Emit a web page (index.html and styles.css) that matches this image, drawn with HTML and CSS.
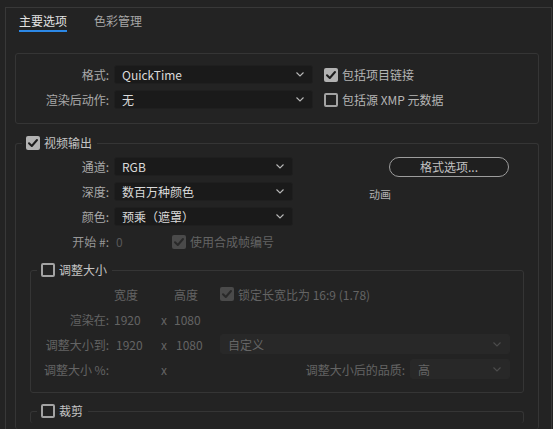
FILE: index.html
```html
<!DOCTYPE html>
<html lang="zh">
<head>
<meta charset="utf-8">
<link rel="stylesheet" href="styles.css">
</head>
<body>
<div class="window">
  <div class="panel">
    <div class="tabs">
      <div class="tab active">主要选项</div>
      <div class="tab">色彩管理</div>
    </div>

    <div class="group format-group">
      <div class="row">
        <div class="label">格式:</div>
        <div class="select w199"><span>QuickTime</span><svg class="chev" viewBox="0 0 8 5"><polyline points="0.5,0.5 4,4 7.5,0.5"/></svg></div>
        <div class="check checked"><svg viewBox="0 0 14 14"><polyline points="3,7.2 5.8,10 11,4"/></svg></div>
        <div class="check-text">包括项目链接</div>
      </div>
      <div class="row">
        <div class="label">渲染后动作:</div>
        <div class="select w199"><span>无</span><svg class="chev" viewBox="0 0 8 5"><polyline points="0.5,0.5 4,4 7.5,0.5"/></svg></div>
        <div class="check"></div>
        <div class="check-text">包括源 XMP 元数据</div>
      </div>
    </div>

    <fieldset class="fs video-fs">
      <legend><span class="check checked"><svg viewBox="0 0 14 14"><polyline points="3,7.2 5.8,10 11,4"/></svg></span><span class="legend-text">视频输出</span></legend>
      <div class="video-body">
        <div class="video-main">
          <div class="video-cols">
            <div class="video-left">
              <div class="row">
                <div class="label">通道:</div>
                <div class="select w179"><span>RGB</span><svg class="chev" viewBox="0 0 8 5"><polyline points="0.5,0.5 4,4 7.5,0.5"/></svg></div>
              </div>
              <div class="row">
                <div class="label">深度:</div>
                <div class="select w179"><span>数百万种颜色</span><svg class="chev" viewBox="0 0 8 5"><polyline points="0.5,0.5 4,4 7.5,0.5"/></svg></div>
              </div>
              <div class="row">
                <div class="label">颜色:</div>
                <div class="select w179"><span>预乘（遮罩）</span><svg class="chev" viewBox="0 0 8 5"><polyline points="0.5,0.5 4,4 7.5,0.5"/></svg></div>
              </div>
            </div>
            <div class="video-right">
              <div class="pill-btn">格式选项...</div>
              <div class="codec">动画</div>
            </div>
          </div>
          <div class="row start-row">
            <div class="label">开始 #:</div>
            <div class="start-val">0</div>
            <div class="check checked disabled"><svg viewBox="0 0 14 14"><polyline points="3,7.2 5.8,10 11,4"/></svg></div>
            <div class="check-text dim">使用合成帧编号</div>
          </div>
        </div>

        <fieldset class="fs resize-fs">
          <legend><span class="check"></span><span class="legend-text">调整大小</span></legend>
          <div class="resize-body">
            <div class="rrow">
              <div class="rlabel"></div>
              <div class="v1 dim">宽度</div>
              <div class="xcol"></div>
              <div class="v2 dim">高度</div>
              <div class="check checked disabled"><svg viewBox="0 0 14 14"><polyline points="3,7.2 5.8,10 11,4"/></svg></div>
              <div class="check-text dim">锁定长宽比为 16:9 (1.78)</div>
            </div>
            <div class="rrow">
              <div class="rlabel">渲染在:</div>
              <div class="v1 dim">1920</div>
              <div class="xcol dim">x</div>
              <div class="v2 dim">1080</div>
            </div>
            <div class="rrow">
              <div class="rlabel">调整大小到:</div>
              <div class="v1 dim inp">1920</div>
              <div class="xcol dim">x</div>
              <div class="v2 dim inp">1080</div>
              <div class="select disabled grow"><span>自定义</span><svg class="chev" viewBox="0 0 8 5"><polyline points="0.5,0.5 4,4 7.5,0.5"/></svg></div>
            </div>
            <div class="rrow">
              <div class="rlabel">调整大小 %:</div>
              <div class="v1"></div>
              <div class="xcol dim">x</div>
              <div class="v2"></div>
              <div class="qlabel">调整大小后的品质:</div>
              <div class="select disabled w100"><span>高</span><svg class="chev" viewBox="0 0 8 5"><polyline points="0.5,0.5 4,4 7.5,0.5"/></svg></div>
            </div>
          </div>
        </fieldset>

        <fieldset class="fs crop-fs">
          <legend><span class="check"></span><span class="legend-text">裁剪</span></legend>
          <div class="crop-body"></div>
        </fieldset>
      </div>
    </fieldset>
  </div>
</div>
</body>
</html>
```

FILE: styles.css
```css
* { box-sizing: border-box; }

html, body {
  margin: 0;
  padding: 0;
  background: #232323;
  overflow: hidden;
  height: 429px;
}

body {
  font-family: "Noto Sans CJK SC", "Noto Sans", sans-serif;
  font-size: 12px;
  color: #a9a9a9;
}

.window {
  padding: 7px 1px 0 5px;
  height: 429px;
}

.panel {
  border: 1px solid #383838;
  border-bottom: none;
  height: 422px;
  overflow: hidden;
}

/* tabs */
.tabs {
  display: flex;
  padding: 4px 0 0 13px;
}

.tab {
  font-size: 12px;
  line-height: 18px;
  height: 20px;
  color: #a6a6a6;
  border-bottom: 2px solid transparent;
}

.tab + .tab {
  margin-left: 27px;
}

.tab.active {
  color: #e2e2e2;
  border-bottom-color: #2c88e6;
}

/* groups */
.group {
  margin: 21px 12px 0 9px;
  border: 1px solid #353535;
  border-radius: 3px;
  padding: 11px 0 14px 0;
  display: flex;
  flex-direction: column;
  gap: 6px;
}

.row {
  display: flex;
  align-items: center;
  height: 19px;
}

.label {
  width: 93px;
  text-align: right;
  color: #a9a9a9;
  white-space: nowrap;
  flex: none;
}

.select {
  display: flex;
  align-items: center;
  justify-content: space-between;
  height: 19px;
  margin-left: 5px;
  padding: 0 8px 0 7px;
  background: #1a1a1a;
  border: 1px solid #1f1f1f;
  border-radius: 3px;
  color: #dadada;
  flex: none;
}

.select span {
  white-space: nowrap;
}

.w199 { width: 199px; }
.w179 { width: 179px; }
.w100 { width: 100px; }

.chev {
  width: 8px;
  height: 5px;
  fill: none;
  stroke: #b8b8b8;
  stroke-width: 1.1;
}

.check {
  width: 14px;
  height: 14px;
  border: 2px solid #a3a3a3;
  border-radius: 2px;
  flex: none;
  display: inline-flex;
  align-items: center;
  justify-content: center;
}

.row > .check {
  margin-left: 11px;
}

.check svg {
  width: 14px;
  height: 14px;
  fill: none;
  stroke: #1d1d1d;
  stroke-width: 2;
  stroke-linecap: round;
  stroke-linejoin: round;
}

.check.checked {
  background: #b2b2b2;
  border: none;
}

.check.checked.disabled {
  background: #4a4a4a;
}

.check.checked.disabled svg {
  stroke: #292929;
}

.check-text {
  margin-left: 4px;
  color: #b5b5b5;
  white-space: nowrap;
}

.dim {
  color: #646464;
}

/* fieldsets */
.fs {
  margin: 0;
  padding: 0;
  min-inline-size: 0;
  border: 1px solid #353535;
  border-radius: 3px;
}

.fs legend {
  padding: 0 5px 0 4px;
  margin-left: 6px;
  height: 16px;
  display: flex;
  align-items: center;
  gap: 4px;
}

.legend-text {
  color: #c4c4c4;
  line-height: 16px;
}

.video-fs {
  margin: 11px 12px 0 9px;
  border-bottom: none;
  height: 294px;
}

.video-body {
  padding-top: 6px;
}

.video-cols {
  display: flex;
}

.video-left {
  display: flex;
  flex-direction: column;
  gap: 6px;
  width: 277px;
}

.video-right {
  margin-left: 76px;
  display: flex;
  flex-direction: column;
}

.pill-btn {
  margin-left: 20px;
  width: 120px;
  height: 20px;
  border: 1.5px solid #9d9d9d;
  border-radius: 10px;
  background: #1f1f1f;
  color: #c2c2c2;
  text-align: center;
  line-height: 17px;
  font-size: 12px;
}

.codec {
  margin-top: 9px;
  font-size: 11px;
  line-height: 16px;
  color: #b0b0b0;
}

.start-row {
  margin-top: 6px;
}

.start-row .label {
  color: #979797;
}

.start-val {
  margin-left: 7px;
  width: 56px;
  color: #585858;
  flex: none;
}

.start-row > .check {
  margin-left: 0;
}

/* resize */
.resize-fs {
  margin: 11px 14px 0 14px;
}

.resize-body {
  padding: 6px 13px 13px 0;
  display: flex;
  flex-direction: column;
  gap: 5px;
}

.rrow {
  display: flex;
  align-items: center;
  height: 20px;
  color: #646464;
}

.rlabel {
  width: 78px;
  text-align: right;
  white-space: nowrap;
  flex: none;
}

.v1 {
  width: 47px;
  margin-left: 5px;
  flex: none;
}

.xcol {
  width: 13px;
  flex: none;
}

.v2 {
  width: 46px;
  flex: none;
}

.inp {
  padding-left: 2px;
}

.rrow > .check {
  margin-left: 0;
}

.select.disabled {
  background: #282828;
  border-color: #282828;
  color: #666666;
  height: 20px;
}

.select.disabled .chev {
  stroke: #4c4c4c;
}

.select.grow {
  flex: 1;
  margin-left: 0;
}

.qlabel {
  flex: 1;
  text-align: right;
  white-space: nowrap;
}

/* crop */
.crop-fs {
  margin: 10px 14px 0 14px;
  border-bottom: none;
}

.crop-body {
  height: 4px;
}
```
